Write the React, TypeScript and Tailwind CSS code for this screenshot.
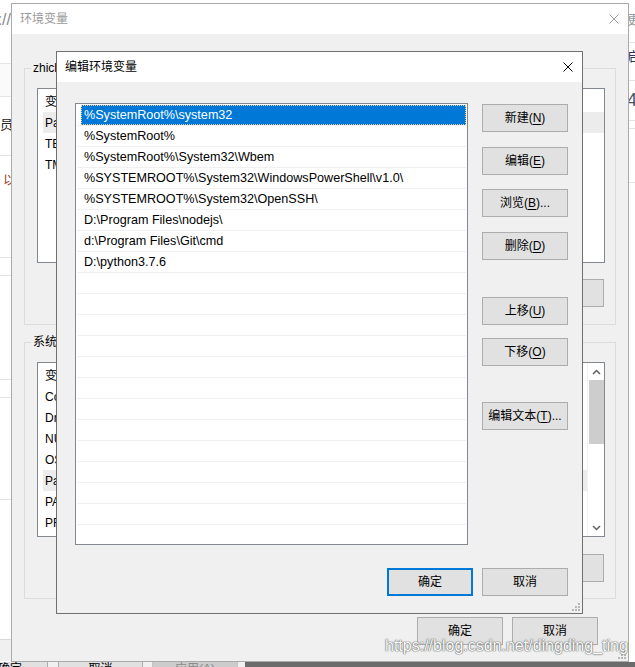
import React from "react";

const paths = [
  "%SystemRoot%\\system32",
  "%SystemRoot%",
  "%SystemRoot%\\System32\\Wbem",
  "%SYSTEMROOT%\\System32\\WindowsPowerShell\\v1.0\\",
  "%SYSTEMROOT%\\System32\\OpenSSH\\",
  "D:\\Program Files\\nodejs\\",
  "d:\\Program Files\\Git\\cmd",
  "D:\\python3.7.6",
];

function CloseX({ color }: { color: string }) {
  return (
    <svg width="10" height="10" viewBox="0 0 10 10" className="shrink-0">
      <path d="M0.5 0.5 L9.5 9.5 M9.5 0.5 L0.5 9.5" stroke={color} strokeWidth="1" fill="none" />
    </svg>
  );
}

function Grip({ className }: { className: string }) {
  return (
    <svg width="8" height="8" viewBox="0 0 8 8" className={className}>
      <rect x="6" y="0" width="2" height="2" fill="#b8b8b8" />
      <rect x="3" y="3" width="2" height="2" fill="#b8b8b8" />
      <rect x="6" y="3" width="2" height="2" fill="#b8b8b8" />
      <rect x="0" y="6" width="2" height="2" fill="#b8b8b8" />
      <rect x="3" y="6" width="2" height="2" fill="#b8b8b8" />
      <rect x="6" y="6" width="2" height="2" fill="#b8b8b8" />
    </svg>
  );
}

function Btn({
  children,
  primary = false,
  className = "",
}: {
  children: React.ReactNode;
  primary?: boolean;
  className?: string;
}) {
  return (
    <div
      className={`flex h-[28px] w-[86px] shrink-0 items-center justify-center bg-[#e1e1e1] text-[12px] leading-none text-black ${
        primary ? "border-2 border-[#0078d7]" : "border border-[#adadad]"
      } ${className}`}
    >
      {children}
    </div>
  );
}

function Key({ k }: { k: string }) {
  return <span className="underline decoration-1 underline-offset-[2px]">{k}</span>;
}

function Group({
  label,
  className = "",
  children,
}: {
  label: string;
  className?: string;
  children: React.ReactNode;
}) {
  return (
    <div className={`relative flex h-[257px] flex-col border border-[#dcdcdc] pl-[12px] pr-[10px] pt-[19px] ${className}`}>
      <span className="absolute -top-[9px] left-[6px] whitespace-nowrap bg-[#f0f0f0] px-[2px] text-[12px] leading-[16px] text-black">
        {label}
      </span>
      {children}
    </div>
  );
}

function VarList({ rows, selected, scroll = false }: { rows: string[]; selected: number; scroll?: boolean }) {
  return (
    <div className="flex h-[175px] border border-[#828790] bg-white">
      <div className="flex-1 pt-[2px]">
        {rows.map((r, i) => (
          <div key={i} className="flex h-[21px] items-stretch pl-[5px]">
            <div className={`flex flex-1 items-center pl-[2px] text-[12px] ${i === selected ? "bg-[#ececec]" : ""}`}>
              {r}
            </div>
          </div>
        ))}
      </div>
      {scroll && (
        <div className="flex w-[17px] flex-col items-center border-l border-[#f2f2f2] bg-white">
          <div className="flex h-[17px] w-full items-center justify-center">
            <svg width="9" height="6" viewBox="0 0 9 6">
              <path d="M1 5 L4.5 1.5 L8 5" stroke="#606060" strokeWidth="1.5" fill="none" />
            </svg>
          </div>
          <div className="h-[64px] w-[15px] bg-[#cdcdcd]" />
          <div className="flex-1" />
          <div className="flex h-[17px] w-full items-center justify-center">
            <svg width="9" height="6" viewBox="0 0 9 6">
              <path d="M1 1 L4.5 4.5 L8 1" stroke="#606060" strokeWidth="1.5" fill="none" />
            </svg>
          </div>
        </div>
      )}
    </div>
  );
}

function Background() {
  return (
    <>
      {/* left edge of the window behind */}
      <div className="absolute left-0 top-0 h-[661px] w-[11px] overflow-hidden bg-white">
        <div className="absolute right-0 top-[10px] flex w-[40px] justify-end whitespace-nowrap text-[16px] leading-[20px] text-[#8a8a8a]">
          s://
        </div>
        <div className="absolute left-0 top-[63px] h-[34px] w-full border-y border-[#e6e6e6] bg-[#fafafa]" />
        <div className="absolute left-0 top-[116px] whitespace-nowrap text-[13px] leading-[18px] text-[#222222]">员看</div>
        <div className="absolute left-0 top-[155px] h-px w-full bg-[#e3e3e3]" />
        <div className="absolute left-[3px] top-[171px] whitespace-nowrap text-[13px] leading-[18px] text-[#a0402f]">以</div>
        <div className="absolute left-0 top-[257px] h-px w-full bg-[#e3e3e3]" />
        <div className="absolute left-0 top-[275px] h-px w-full bg-[#e3e3e3]" />
        <div className="absolute left-0 top-[379px] h-px w-full bg-[#e3e3e3]" />
        <div className="absolute left-0 top-[397px] h-px w-full bg-[#e3e3e3]" />
        <div className="absolute left-0 top-[499px] h-px w-full bg-[#e3e3e3]" />
        <div className="absolute bottom-0 left-0 h-[22px] w-full border-t border-[#d9d9d9] bg-[#f0f0f0]" />
      </div>
      {/* right edge of the window behind */}
      <div className="absolute left-[629px] top-0 h-[661px] w-[6px] overflow-hidden bg-white">
        <div className="absolute -left-[2px] top-[11px] whitespace-nowrap text-[13px] leading-[18px] text-[#9a9a9a]">更</div>
        <div className="absolute left-0 top-[42px] h-px w-full bg-[#e3e3e3]" />
        <div className="absolute -left-[2px] top-[48px] whitespace-nowrap text-[13px] leading-[18px] text-[#333355]">启</div>
        <div className="absolute left-0 top-[80px] h-px w-full bg-[#e3e3e3]" />
        <div className="absolute -left-[2px] top-[90px] whitespace-nowrap text-[18px] leading-[20px] text-[#4a5060]">4</div>
        <div className="absolute left-0 top-[120px] h-px w-full bg-[#e3e3e3]" />
        <div className="absolute left-0 top-[128px] h-px w-full bg-[#e3e3e3]" />
        <div className="absolute left-0 top-[182px] h-px w-full bg-[#e3e3e3]" />
      </div>
      {/* bottom strip */}
      <div className="absolute left-0 top-[662px] flex h-[5px] w-[635px] overflow-hidden bg-[#f0f0f0]">
        <div className="relative h-[24px] w-[48px] shrink-0 border-r border-[#adadad] bg-[#e1e1e1]">
          <span className="absolute -left-[2px] top-0 text-[12px] leading-[14px]">确定</span>
        </div>
        <div className="w-[10px] shrink-0" />
        <div className="relative flex h-[24px] w-[85px] shrink-0 justify-center border-x border-[#adadad] bg-[#e1e1e1]">
          <span className="text-[12px] leading-[14px]">取消</span>
        </div>
        <div className="w-[9px] shrink-0" />
        <div className="relative flex h-[24px] w-[86px] shrink-0 justify-center border-x border-[#c4c4c4] bg-[#cccccc]">
          <span className="text-[12px] leading-[14px] text-[#8a8a8a]">应用(A)</span>
        </div>
        <div className="w-[7px] shrink-0" />
        <div className="h-full flex-1 bg-[#6b6b6b]" />
      </div>
    </>
  );
}

function OuterDialog() {
  return (
    <div className="absolute left-[11px] top-[3px] flex h-[659px] w-[618px] flex-col border border-[#aaaaaa] bg-[#f0f0f0]">
      <div className="flex h-[30px] shrink-0 items-center justify-between bg-white pl-[8px] pr-[9px]">
        <span className="text-[12px] text-[#9a9a9a]">环境变量</span>
        <CloseX color="#a0a0a0" />
      </div>
      <div className="flex flex-1 flex-col px-[12px] pt-[34px]">
        <Group label="zhicheng 的用户变量(U)">
          <VarList rows={["变量", "Path", "TEMP", "TMP"]} selected={1} />
          <div className="mt-[16px] flex justify-end gap-[9px] pr-[1px]">
            <Btn>新建(<Key k="N" />)...</Btn>
            <Btn>编辑(<Key k="E" />)...</Btn>
            <Btn>删除(<Key k="D" />)</Btn>
          </div>
        </Group>
        <Group label="系统变量(S)" className="mt-[17px]">
          <VarList
            rows={["变量", "ComSpec", "DriverData", "NUMBER_OF_PROCESSORS", "OS", "Path", "PATHEXT", "PROCESSOR_ARCHITECTURE"]}
            selected={5}
            scroll
          />
          <div className="mt-[17px] flex justify-end gap-[9px] pr-[1px]">
            <Btn>新建(<Key k="W" />)...</Btn>
            <Btn>编辑(<Key k="I" />)...</Btn>
            <Btn>删除(<Key k="L" />)</Btn>
          </div>
        </Group>
        <div className="mt-[18px] flex justify-end gap-[9px] pr-[18px]">
          <Btn>确定</Btn>
          <Btn>取消</Btn>
        </div>
      </div>
      <Grip className="absolute bottom-[2px] right-[2px]" />
    </div>
  );
}

function InnerDialog() {
  const rows = Array.from({ length: 21 }, (_, i) => paths[i] ?? "");
  return (
    <div className="absolute left-[56px] top-[51px] flex h-[563px] w-[527px] flex-col border border-[#707070] bg-[#f0f0f0]">
      <div className="flex h-[30px] shrink-0 items-center justify-between bg-white pl-[8px] pr-[9px]">
        <span className="text-[12px] text-black">编辑环境变量</span>
        <CloseX color="#000000" />
      </div>
      <div className="flex flex-1 flex-col pl-[18px] pr-[14px] pt-[21px]">
        <div className="flex gap-[14px]">
          <div className="h-[442px] w-[393px] overflow-hidden border border-[#828790] bg-white px-[1px] pt-[1px]">
            {rows.map((p, i) => (
              <div key={i} className="flex h-[21px] border-b border-[#f0f0f0]">
                {i === 0 ? (
                  <div className="ml-[4px] flex flex-1 items-center border border-dotted border-[#e8c890] bg-[#0078d7] pl-[2px] text-[12.6px] text-white">
                    {p}
                  </div>
                ) : (
                  <div className="ml-[5px] flex flex-1 items-center pl-[2px] text-[12.6px] text-black">{p}</div>
                )}
              </div>
            ))}
          </div>
          <div className="flex flex-col pt-[1px]">
            <Btn>新建(<Key k="N" />)</Btn>
            <Btn className="mt-[15px]">编辑(<Key k="E" />)</Btn>
            <Btn className="mt-[14px]">浏览(<Key k="B" />)...</Btn>
            <Btn className="mt-[15px]">删除(<Key k="D" />)</Btn>
            <Btn className="mt-[37px]">上移(<Key k="U" />)</Btn>
            <Btn className="mt-[13px]">下移(<Key k="O" />)</Btn>
            <Btn className="mt-[36px]">编辑文本(<Key k="T" />)...</Btn>
          </div>
        </div>
        <div className="mt-[23px] flex justify-end gap-[9px]">
          <Btn primary>确定</Btn>
          <Btn>取消</Btn>
        </div>
      </div>
      <Grip className="absolute bottom-[2px] right-[2px]" />
    </div>
  );
}

export default function App() {
  return (
    <div className="relative h-[667px] w-[635px] overflow-hidden bg-white font-['Liberation_Sans','Noto_Sans_CJK_SC',sans-serif] text-[12px] text-black">
      <Background />
      <OuterDialog />
      <InnerDialog />
      <div className="pointer-events-none absolute left-[385px] top-[637px] whitespace-nowrap font-['Liberation_Sans',sans-serif] text-[16px] leading-[18px] text-[#fbfbfb] [text-shadow:0_0_1px_#555555,0_0_1px_#666666,0_0_2px_#aaaaaa]">
        https://blog.csdn.net/dingding_ting
      </div>
    </div>
  );
}
